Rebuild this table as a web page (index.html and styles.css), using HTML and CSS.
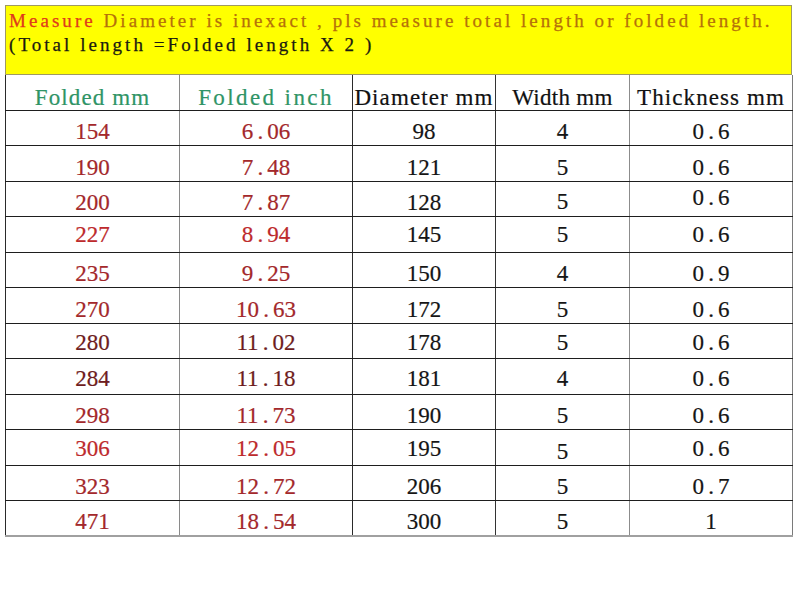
FILE: index.html
```html
<!DOCTYPE html>
<html>
<head>
<meta charset="utf-8">
<link rel="stylesheet" href="styles.css">
</head>
<body>
<div class="sheet">
  <div class="note">
    <p class="line"><span class="red">Measure</span><span class="amber"> Diameter is inexact , pls measure total length or folded length.</span></p>
    <p class="line dark">(Total length =Folded length X 2 )</p>
  </div>
  <table class="grid">
    <colgroup>
      <col class="c1"><col class="c2"><col class="c3"><col class="c4"><col class="c5">
    </colgroup>
    <thead>
      <tr class="head">
        <th class="g1 green">Folded mm</th>
        <th class="g2 green wide">Folded inch</th>
        <th class="g3">Diameter mm</th>
        <th class="g4 tight">Width mm</th>
        <th class="g5">Thickness mm</th>
      </tr>
    </thead>
    <tbody>
      <tr><td class="g1 rd">154</td><td class="g2 rd">6<span class="pt">.</span>06</td><td class="g3">98</td><td class="g4">4</td><td class="g5">0<span class="pt">.</span>6</td></tr>
      <tr><td class="g1 rd">190</td><td class="g2 rd">7<span class="pt">.</span>48</td><td class="g3">121</td><td class="g4">5</td><td class="g5">0<span class="pt">.</span>6</td></tr>
      <tr><td class="g1 rd">200</td><td class="g2 rd">7<span class="pt">.</span>87</td><td class="g3">128</td><td class="g4 up1">5</td><td class="g5 up5">0<span class="pt">.</span>6</td></tr>
      <tr class="lift4"><td class="g1 rb">227</td><td class="g2 rb">8<span class="pt">.</span>94</td><td class="g3">145</td><td class="g4">5</td><td class="g5">0<span class="pt">.</span>6</td></tr>
      <tr><td class="g1 rd">235</td><td class="g2 rd">9<span class="pt">.</span>25</td><td class="g3">150</td><td class="g4">4</td><td class="g5">0<span class="pt">.</span>9</td></tr>
      <tr><td class="g1 rd">270</td><td class="g2 rd">10<span class="pt">.</span>63</td><td class="g3">172</td><td class="g4">5</td><td class="g5">0<span class="pt">.</span>6</td></tr>
      <tr class="lift2"><td class="g1 rm">280</td><td class="g2 rm">11<span class="pt">.</span>02</td><td class="g3">178</td><td class="g4">5</td><td class="g5">0<span class="pt">.</span>6</td></tr>
      <tr class="lift2"><td class="g1 rm">284</td><td class="g2 rm">11<span class="pt">.</span>18</td><td class="g3">181</td><td class="g4">4</td><td class="g5">0<span class="pt">.</span>6</td></tr>
      <tr><td class="g1 rd">298</td><td class="g2 rd">11<span class="pt">.</span>73</td><td class="g3">190</td><td class="g4">5</td><td class="g5">0<span class="pt">.</span>6</td></tr>
      <tr class="lift3"><td class="g1 rb">306</td><td class="g2 rb">12<span class="pt">.</span>05</td><td class="g3">195</td><td class="g4 flat">5</td><td class="g5">0<span class="pt">.</span>6</td></tr>
      <tr><td class="g1 rd">323</td><td class="g2 rd">12<span class="pt">.</span>72</td><td class="g3">206</td><td class="g4">5</td><td class="g5">0<span class="pt">.</span>7</td></tr>
      <tr class="last"><td class="g1 rd">471</td><td class="g2 rd">18<span class="pt">.</span>54</td><td class="g3">300</td><td class="g4">5</td><td class="g5">1</td></tr>
    </tbody>
  </table>
</div>
</body>
</html>
```

FILE: styles.css
```css
html, body {
  margin: 0;
  padding: 0;
  background: #ffffff;
}

.sheet {
  width: 787px;
  padding: 5px 0 0 5px;
}

.note {
  box-sizing: border-box;
  height: 70px;
  background: #ffff00;
  border: 1px solid #9f9a62;
  padding: 3px 0 0 3px;
  font-family: "Liberation Serif", serif;
  font-size: 19px;
  letter-spacing: 3.05px;
  line-height: 24px;
  -webkit-text-stroke: 0.25px currentColor;
}

.line {
  margin: 0;
  white-space: nowrap;
}

.red { color: #e0391c; }
.amber { color: #b5700a; }
.dark { color: #1a1a10; }

.grid {
  border-collapse: collapse;
  table-layout: fixed;
  width: 787px;
}

.c1 { width: 174px; }
.c2 { width: 173px; }
.c3 { width: 143px; }
.c4 { width: 134px; }
.c5 { width: 163px; }

.grid th,
.grid td {
  padding: 0 0 2px 0;
  text-align: center;
  vertical-align: bottom;
  white-space: nowrap;
  overflow: visible;
  border-top: 1px solid #1e1e1e;
  border-bottom: 1px solid #1e1e1e;
}

.grid tr { height: 35.5px; }
.grid tr.head { height: 35px; }

.head th {
  border-top: none;
  font-family: "Liberation Serif", serif;
  font-weight: normal;
  font-size: 23px;
  letter-spacing: 1.1px;
  line-height: 23px;
  color: #111111;
  padding-bottom: 1px;
  -webkit-text-stroke: 0.2px currentColor;
}

.head th.green { color: #2f9466; }
.head th.wide { letter-spacing: 2.4px; }
.head th.tight { letter-spacing: 0.3px; }

.grid td {
  font-family: "Liberation Serif", serif;
  font-size: 23px;
  line-height: 23px;
  color: #151515;
  -webkit-text-stroke: 0.2px currentColor;
}

.g1 { border-left: 1px solid #2a2a2a; border-right: 1px solid #8a8a8a; }
.g2 { border-right: 1px solid #2a2a2a; }
.g3 { border-right: 1px solid #333333; }
.g4 { border-right: 1px solid #8c8c8c; }
.g5 { border-right: 1px solid #7a7a7a; }

.grid td.rd { color: #a3282b; }
.grid td.rb { color: #bd2a2c; }
.grid td.rm { color: #6e1c20; }

.pt {
  display: inline-block;
  width: 14px;
  text-align: center;
}

.lift4 td { padding-bottom: 6px; }
.lift3 td { padding-bottom: 5px; }
.lift2 td { padding-bottom: 4px; }
.grid td.up1 { padding-bottom: 3px; }
.grid td.up5 { padding-bottom: 7px; }
.lift3 td.flat { padding-bottom: 2px; }

.last td { border-bottom: 2px solid #a0a0a0; }
```
